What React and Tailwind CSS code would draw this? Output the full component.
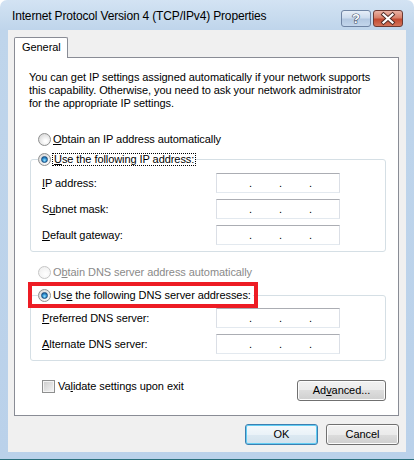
const BTN =
  "flex h-[21px] items-center justify-center rounded-[3px] border border-[#707070] bg-[linear-gradient(#f2f2f2_0%,#ebebeb_50%,#dddddd_50%,#cfcfcf_100%)] shadow-[inset_0_0_0_1px_#fcfcfc] text-[11px]";

function Radio({ checked, disabled }) {
  return (
    <span
      className={`flex h-[13px] w-[13px] shrink-0 items-center justify-center rounded-full border ${
        disabled
          ? "border-[#c6c6c6] bg-[radial-gradient(circle_at_60%_65%,#ffffff,#ececec)]"
          : "border-[#8e8f8f] bg-[radial-gradient(circle_at_60%_65%,#ffffff_10%,#d4d4d4_90%)]"
      }`}
    >
      {checked && (
        <span className="h-[7px] w-[7px] rounded-full border border-[#1b4e7e] bg-[radial-gradient(circle_at_50%_65%,#9ae6ff_0%,#2f8fd0_50%,#0f4a85_100%)]" />
      )}
    </span>
  );
}

function IpField() {
  return (
    <div className="flex h-[20px] w-[124px] items-center border border-[#dbdfe6] border-t-[#abadb3] border-b-[#e3e9ef] bg-white pl-[32px] leading-[18px]">
      <span className="w-[30px]">.</span>
      <span className="w-[30px]">.</span>
      <span className="w-[30px]">.</span>
    </div>
  );
}

function Row({ pre, key1, post }) {
  return (
    <div className="flex h-[20px] items-center">
      <span className="w-[174px] whitespace-nowrap">
        {pre}
        <u>{key1}</u>
        {post}
      </span>
      <IpField />
    </div>
  );
}

export default function App() {
  return (
    <div className="relative h-[461px] w-[414px] bg-white font-['Liberation_Sans',Arial,sans-serif] text-[11px] tracking-[-0.07px] text-black">
      <div className="flex h-[460px] w-[414px] flex-col rounded-t-[7px] border-b border-[#2a6f7c] bg-[linear-gradient(#d3e3f3,#bfd5eb_30px,#bad1ea)] px-[8px]">
        {/* title bar */}
        <div className="flex h-[30px] items-start">
          <span className="whitespace-nowrap pl-[4px] pt-[9px] text-[12px] leading-[15px] tracking-[-0.16px]">
            Internet Protocol Version 4 (TCP/IPv4) Properties
          </span>
          <div className="ml-auto mr-[3px] mt-[10px] flex gap-[2px]">
            <div className="h-[17px] w-[30px] rounded-[3px] border border-[#6f84a3] bg-[linear-gradient(#e6eef8_0%,#cddcee_45%,#b3c8e1_55%,#c3d6ec_100%)]">
              <svg width="28" height="15" viewBox="0 0 28 15">
                <text
                  x="14"
                  y="12"
                  textAnchor="middle"
                  fontFamily="Liberation Sans, Arial, sans-serif"
                  fontWeight="700"
                  fontSize="13"
                  fill="#ffffff"
                  stroke="#44556f"
                  strokeWidth="1.2"
                  paintOrder="stroke"
                >
                  ?
                </text>
              </svg>
            </div>
            <div className="h-[17px] w-[30px] rounded-[3px] border border-[#6c3a33] bg-[linear-gradient(#eab3a5_0%,#d8806a_45%,#c24a31_55%,#d4745a_100%)]">
              <svg width="28" height="15" viewBox="0 0 28 15">
                <path d="M9.5 3.5 L18.5 11.5 M18.5 3.5 L9.5 11.5" stroke="#4d2a25" strokeWidth="4" strokeLinecap="square" />
                <path d="M9.5 3.5 L18.5 11.5 M18.5 3.5 L9.5 11.5" stroke="#ffffff" strokeWidth="2.2" strokeLinecap="square" />
              </svg>
            </div>
          </div>
        </div>

        {/* client area */}
        <div className="flex h-[422px] flex-col bg-[#f0f0f0] pl-[6px] pr-[7px]">
          <div className="mt-[7px] flex">
            <div className="relative z-10 -mb-px flex h-[21px] w-[54px] items-start rounded-t-[2px] border border-b-0 border-[#898c95] bg-white pl-[7px] pt-[3px] leading-[13px]">
              General
            </div>
          </div>

          {/* tab panel */}
          <div className="flex h-[359px] flex-col border border-[#898c95] bg-white">
            <p className="mt-[13px] whitespace-nowrap pl-[14px] leading-[13px]">
              You can get IP settings assigned automatically if your network supports
              <br />
              this capability. Otherwise, you need to ask your network administrator
              <br />
              for the appropriate IP settings.
            </p>

            <div className="mt-[22px] flex h-[14px] items-center gap-[2px] pl-[23px]">
              <Radio />
              <span>
                <u>O</u>btain an IP address automatically
              </span>
            </div>

            <fieldset className="ml-[15px] mr-[12px] mt-[6px] rounded-[3px] border border-[#d5dfe5] pb-[6px] pt-[7px]">
              <legend className="ml-[7px] flex h-[14px] items-center gap-[1px]">
                <Radio checked />
                <span className="border border-dotted border-black px-[1px] leading-[11px]">
                  <u>U</u>se the following IP address:
                </span>
              </legend>
              <div className="flex flex-col gap-[6px] pl-[11px]">
                <Row pre="" key1="I" post="P address:" />
                <Row pre="S" key1="u" post="bnet mask:" />
                <Row pre="" key1="D" post="efault gateway:" />
              </div>
            </fieldset>

            <div className="mt-[13px] flex h-[14px] items-center gap-[2px] pl-[23px] text-[#8a8a8a]">
              <Radio disabled />
              <span>
                O<u>b</u>tain DNS server address automatically
              </span>
            </div>

            <fieldset className="ml-[15px] mr-[12px] mt-[9px] rounded-[3px] border border-[#d5dfe5] pb-[6px] pt-[6px]">
              <legend className="ml-[7px] flex h-[14px] items-center gap-[2px] pr-[2px]">
                <Radio checked />
                <span>
                  Us<u>e</u> the following DNS server addresses:
                </span>
              </legend>
              <div className="flex flex-col gap-[6px] pl-[11px]">
                <Row pre="" key1="P" post="referred DNS server:" />
                <Row pre="" key1="A" post="lternate DNS server:" />
              </div>
            </fieldset>

            <div className="mt-[19px] flex items-start pl-[27px] pr-[12px]">
              <span className="h-[13px] w-[13px] border border-[#8e8f8f] bg-[linear-gradient(135deg,#cbcbcb,#f6f6f6)] shadow-[inset_0_0_0_1px_#f4f4f4]" />
              <span className="ml-[3px] leading-[13px]">
                Va<u>l</u>idate settings upon exit
              </span>
              <button className={`${BTN} ml-auto w-[89px]`}>
                Ad<u>v</u>anced...
              </button>
            </div>
          </div>

          {/* dialog buttons */}
          <div className="mt-[8px] flex justify-end gap-[8px]">
            <button className="flex h-[21px] w-[73px] items-center justify-center rounded-[3px] border border-[#3c7fb1] bg-[linear-gradient(#f4f9fc_0%,#eaf2f8_50%,#dce9f2_50%,#d3e2ed_100%)] text-[11px] shadow-[inset_0_0_0_1px_#62cdf3]">
              OK
            </button>
            <button className={`${BTN} w-[73px]`}>Cancel</button>
          </div>
        </div>
      </div>

      {/* red highlight annotation */}
      <div className="pointer-events-none absolute left-[28px] top-[282px] h-[26px] w-[230px] border-4 border-[#ed1c24]" />
    </div>
  );
}
